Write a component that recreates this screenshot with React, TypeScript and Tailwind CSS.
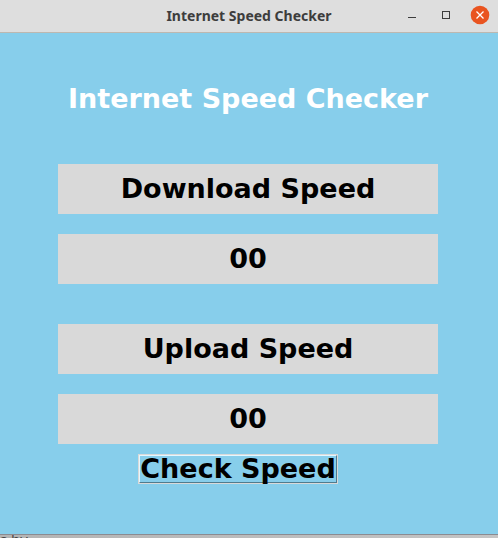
import { useState } from "react";

function TitleBar() {
  return (
    <header className="relative flex h-[33px] items-center justify-center border-b border-[#bdb8b0] bg-[#dedede] font-['Noto_Sans','Open_Sans',sans-serif]">
      <span className="text-[14px] leading-5 font-bold text-[#3d3d3d]">Internet Speed Checker</span>
      <div className="absolute top-0 right-2 flex h-[30px] items-center gap-[14px]">
        <button type="button" aria-label="Minimize" className="size-5">
          <svg viewBox="0 0 20 20" className="size-5" aria-hidden="true">
            <rect x="6" y="12" width="8" height="1" fill="#3d3d3d" />
          </svg>
        </button>
        <button type="button" aria-label="Maximize" className="size-5">
          <svg viewBox="0 0 20 20" className="size-5" aria-hidden="true">
            <rect x="6.5" y="6.5" width="7" height="7" fill="none" stroke="#3d3d3d" />
          </svg>
        </button>
        <button type="button" aria-label="Close" className="size-5">
          <svg viewBox="0 0 20 20" className="size-5" aria-hidden="true">
            <circle cx="10" cy="10" r="9.3" fill="#e95420" />
            <path d="M6.5 6.5l7 7M13.5 6.5l-7 7" stroke="#fff" strokeWidth="1.3" />
          </svg>
        </button>
      </div>
    </header>
  );
}

function Reading({ id, label, value }: { id: string; label: string; value: string }) {
  return (
    <section className="flex w-full flex-col gap-5">
      <label htmlFor={id} className="flex h-[50px] items-center justify-center bg-[#d9d9d9]">
        {label}
      </label>
      <output id={id} className="flex h-[50px] items-center justify-center bg-[#d9d9d9]">
        {value}
      </output>
    </section>
  );
}

export default function App() {
  const [speeds] = useState({ download: "00", upload: "00" });

  return (
    <div className="flex min-h-screen flex-col bg-[#bebebe]">
      <div className="flex flex-1 flex-col border-b border-[#8b8b91] bg-[#87ceeb]">
        <TitleBar />
        <main className="flex flex-1 flex-col items-center pt-[51px] pr-[60px] pb-[50px] pl-[58px] font-['DejaVu_Sans',sans-serif] text-[27px] leading-[30px] font-bold text-black">
          <h1 className="mb-[50px] whitespace-nowrap text-white">Internet Speed Checker</h1>
          <div className="flex w-full flex-col gap-10">
            <Reading id="download" label="Download Speed" value={speeds.download} />
            <Reading id="upload" label="Upload Speed" value={speeds.upload} />
          </div>
          <button
            type="button"
            className="mt-[10px] mr-5 border border-[#d9d9d9]"
          >
            <span className="flex h-7 w-[198px] items-center justify-center border border-t-[#e4f7ff] border-r-[#517b8d] border-b-[#517b8d] border-l-[#e4f7ff] whitespace-nowrap">
              Check Speed
            </span>
          </button>
        </main>
      </div>
      <footer className="h-[3px] overflow-hidden bg-linear-to-r from-[#b4b4b4] to-[#c4c4c4] font-['Open_Sans',sans-serif] text-[15px] leading-[8px] text-[#444444]">
        s by
      </footer>
    </div>
  );
}
